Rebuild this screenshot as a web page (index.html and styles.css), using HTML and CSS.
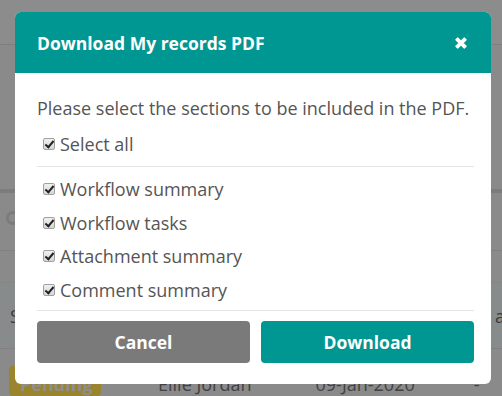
FILE: index.html
```html
<!DOCTYPE html>
<html>
<head>
<meta charset="utf-8">
<link rel="stylesheet" href="styles.css">
</head>
<body>
<div class="page">
  <div class="topbar"></div>
  <div class="gap1"></div>
  <div class="band"></div>
  <div class="searchrow"><span class="pin"></span></div>
  <div class="gap2"></div>
  <div class="thead"><span class="th-left">S</span><span class="th-right">a</span></div>
  <div class="trow">
    <span class="badge">Pending</span>
    <span class="cell name">Ellie Jordan</span>
    <span class="cell date">09-Jan-2020</span>
    <span class="cell dash">-</span>
  </div>
</div>

<div class="modal">
  <div class="modal-header">
    <h1 class="modal-title">Download My records PDF</h1>
    <svg class="close" width="14" height="14" viewBox="0 0 12 12"><path d="M1.6 3.2 L3.2 1.6 L6 4.4 L8.8 1.6 L10.4 3.2 L7.6 6 L10.4 8.8 L8.8 10.4 L6 7.6 L3.2 10.4 L1.6 8.8 L4.4 6 Z" fill="#fff" stroke="#fff" stroke-width="1" stroke-linejoin="round"/></svg>
  </div>
  <div class="modal-body">
    <p class="intro">Please select the sections to be included in the PDF.</p>
    <div class="check-row"><span class="cb"></span><span>Select all</span></div>
    <hr class="sep">
    <div class="check-row"><span class="cb"></span><span>Workflow summary</span></div>
    <div class="check-row"><span class="cb"></span><span>Workflow tasks</span></div>
    <div class="check-row"><span class="cb"></span><span>Attachment summary</span></div>
    <div class="check-row"><span class="cb"></span><span>Comment summary</span></div>
    <hr class="sep sep2">
    <div class="actions">
      <button class="btn cancel">Cancel</button>
      <button class="btn download">Download</button>
    </div>
  </div>
</div>
</body>
</html>
```
FILE: styles.css
```css
* { box-sizing: border-box; }
html, body { margin: 0; padding: 0; }
body {
  width: 502px;
  height: 396px;
  overflow: hidden;
  background: #8a8a8a;
  font-family: "Open Sans", "Liberation Sans", sans-serif;
  position: relative;
}
.page { display: flex; flex-direction: column; }
.topbar { height: 45px; background: #8c8c8c; border-bottom: 1px solid #7f7f7f; }
.gap1 { height: 144px; }
.band { height: 4px; background: #7c7c7c; }
.searchrow { height: 58px; border-bottom: 1px solid #808080; position: relative; }
.pin {
  position: absolute; left: 6px; top: 18px; width: 14px; height: 14px;
  border: 3px solid #7c7c7c; border-radius: 50%;
}
.gap2 { height: 32px; border-bottom: 1px solid #858585; }
.thead {
  height: 66px; background: #878b8b; border-bottom: 1px solid #808080;
  display: flex; justify-content: space-between; align-items: center;
  font-size: 18px; color: #3c3c3c; padding: 0 0 0 10px;
}
.th-right { margin-right: -3px; }
.trow { display: flex; align-items: flex-start; padding-top: 17px; font-size: 18px; line-height: 24px; color: #424242; }
.badge {
  margin-left: 9px; width: 92px; height: 30px; background: #9a842e; border-radius: 4px;
  color: #8e8e8e; font-weight: 700; padding: 6px 0 0 11px;
}
.cell { padding-top: 6px; }
.name { margin-left: 57px; }
.date { margin-left: 64px; }
.dash { margin-left: 59px; }

.modal {
  position: absolute; left: 15px; top: 12px; width: 476px; height: 372px;
  background: #fff; border-radius: 6px; overflow: hidden;
}
.modal-header {
  height: 61px; background: #009691; display: flex; align-items: center;
  justify-content: space-between; padding: 0 23px 0 22px;
}
.modal-title { margin: 0; font-size: 17.5px; font-weight: 700; color: #fff; }
.close { display: block; }
.modal-body { padding: 23px 17px 21px 22px; color: #555; }
.intro { margin: 0 0 7px; font-size: 18px; line-height: 24px; }
.check-row { height: 33.5px; display: flex; align-items: center; font-size: 18px; line-height: 24px; }
.cb {
  width: 12px; height: 12px; margin: 0 5px 0 6px; border: 1px solid #a0a0a0; border-radius: 2px;
  background: linear-gradient(#f0f0f0, #d6d6d6);
  position: relative; flex: none;
}
.cb::after {
  content: ""; position: absolute; left: 3px; top: 0px; width: 3px; height: 7px;
  border: solid #222; border-width: 0 2px 2px 0; transform: rotate(40deg);
}
.sep { border: 0; border-top: 1px solid #e5e5e5; margin: 5px 0 6px; }
.sep2 { margin: 3px 0 10px; }
.actions { display: flex; gap: 11px; }
.btn {
  flex: 1; height: 42px; border: 0; border-radius: 4px; color: #fff;
  font-family: "Open Sans", "Liberation Sans", sans-serif; font-size: 17.5px; font-weight: 700;
}
.cancel { background: #7a7a7a; }
.download { background: #009691; }
```
